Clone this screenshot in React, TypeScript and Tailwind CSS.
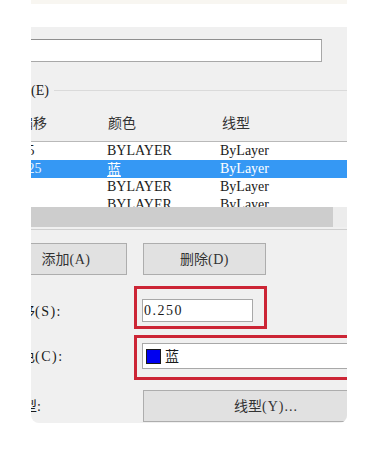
const BASE = "font-['Liberation_Serif',serif] text-[14px] leading-[16px] text-[#1a1a1a]";

// CJK runs are set in the CJK face; latin stays in the serif
function T({ s, className = "" }: { s: string; className?: string }) {
  const parts = s.split(/([\u3000-\u9fff]+)/);
  return (
    <span className={`whitespace-pre ${className}`}>
      {parts.map((p, i) =>
        /[\u3000-\u9fff]/.test(p) ? (
          <span key={i} className="font-['Noto_Sans_CJK_SC',sans-serif] tracking-normal">
            {p}
          </span>
        ) : (
          p
        )
      )}
    </span>
  );
}

type Row = { off: string; color: string; type: string; sel?: boolean };

const ROWS: Row[] = [
  { off: "0.5", color: "BYLAYER", type: "ByLayer" },
  { off: "0.25", color: "蓝", type: "ByLayer", sel: true },
  { off: "0", color: "BYLAYER", type: "ByLayer" },
  { off: "0", color: "BYLAYER", type: "ByLayer" },
];

const COLS = "grid grid-cols-[90px_113px_1fr] -ml-[14px]";

export default function App() {
  return (
    <div className={`w-[388px] h-[449px] bg-white overflow-hidden ${BASE}`}>
      <div className="ml-[31px] w-[316px] h-[4px] bg-[#f8f6f1]" />

      <div className="relative ml-[31px] mt-[23px] w-[316px] h-[396px] bg-[#f0f0f0] rounded-b-[8px] overflow-hidden">
        {/* name field */}
        <div className="-ml-[1px] mt-[12px] w-[292px] h-[23px] bg-white border border-[#a8a8a8] border-t-[#8f8f8f]" />

        {/* group caption */}
        <div className="mt-[20px] flex items-center h-[16px]">
          <T s="图元(E)" className="-ml-[28px] shrink-0" />
          <div className="ml-[5px] flex-1 h-px bg-[#dadada]" />
        </div>

        {/* list header */}
        <div className={`h-[44px] pt-[16px] border-b border-[#b9b9b9] ${COLS} text-[#333]`}>
          <T s="偏移" className="pl-[2px]" />
          <T s="颜色" className="pl-[1px]" />
          <T s="线型" className="pl-[2px]" />
        </div>

        {/* list rows */}
        <div className="h-[65px] bg-white overflow-hidden">
          {ROWS.map((r, i) => (
            <div
              key={i}
              className={`h-[18px] ${COLS} items-center ${r.sel ? "bg-[#3598f4] text-white" : ""}`}
            >
              <T s={r.off} className={r.sel ? "text-[#e6f2ff]" : ""} />
              <T s={r.color} className={r.sel ? "underline underline-offset-2" : ""} />
              <T s={r.type} />
            </div>
          ))}
        </div>

        {/* horizontal scrollbar */}
        <div className="h-[23px] flex border-b border-[#cfcfcf]">
          <div className="w-[302px] h-[20px] bg-[#cdcdcd]" />
          <div className="flex-1 h-[20px] bg-[#ececec]" />
        </div>

        {/* add / delete */}
        <div className="mt-[13px] flex gap-[16px]">
          <button className="-ml-[26px] w-[122px] h-[32px] shrink-0 bg-[#e1e1e1] border border-[#adadad] text-[#333] tracking-[0.5px]">
            <T s="添加(A)" />
          </button>
          <button className="w-[123px] h-[32px] shrink-0 bg-[#e1e1e1] border border-[#adadad] text-[#333] tracking-[0.5px]">
            <T s="删除(D)" />
          </button>
        </div>

        {/* offset */}
        <div className="mt-[24px] flex items-center h-[23px]">
          <div className="-ml-[24px] w-[135px] shrink-0 tracking-[1.5px]">
            <T s="偏移(S):" />
          </div>
          <div className="w-[111px] h-[23px] shrink-0 bg-white border border-[#a8a8a8] flex items-center pl-[1px] tracking-[1.5px]">
            <T s="0.250" />
          </div>
        </div>

        {/* color */}
        <div className="mt-[21px] flex items-center h-[26px]">
          <div className="-ml-[24px] w-[135px] shrink-0 tracking-[1.5px]">
            <T s="颜色(C):" />
          </div>
          <div className="w-[240px] h-[26px] shrink-0 bg-white border border-[#a8a8a8] flex items-center pl-[3px] gap-[4px]">
            <div className="w-[15px] h-[15px] bg-[#0000f0] border border-[#1a1a1a]" />
            <T s="蓝" />
          </div>
        </div>

        {/* linetype */}
        <div className="mt-[21px] flex items-center h-[32px]">
          <div className="-ml-[22px] w-[134px] shrink-0 tracking-[1.5px]">
            <T s="线型:" />
          </div>
          <button className="w-[246px] h-[32px] shrink-0 bg-[#e1e1e1] border border-[#adadad] text-[#333] tracking-[1px]">
            <T s="线型(Y)..." />
          </button>
        </div>

        {/* red annotation boxes */}
        <div className="absolute left-[103px] top-[259px] w-[133px] h-[43px] border-[3px] border-[#cc2535]" />
        <div className="absolute left-[103px] top-[308px] w-[260px] h-[45px] border-[3px] border-[#cc2535]" />
      </div>
    </div>
  );
}
